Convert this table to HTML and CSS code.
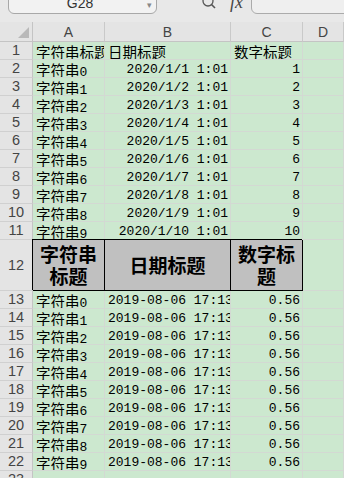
FILE: index.html
```html
<!DOCTYPE html>
<html lang="zh-CN">
<head>
<meta charset="utf-8">
<title>工作表</title>
<link rel="stylesheet" href="styles.css">
</head>
<body>
<div class="app">
  <div class="formula-bar">
    <div class="namebox"><span class="ref">G28</span><span class="drop">▾</span></div>
    <svg class="lookup" width="20" height="14" viewBox="0 0 20 14">
      <circle cx="8" cy="1" r="5" fill="none" stroke="#555" stroke-width="1.3"/>
      <line x1="11.5" y1="4.5" x2="15" y2="8" stroke="#555" stroke-width="1.6"/>
    </svg>
    <span class="fx">fx</span>
    <div class="input"></div>
  </div>

  <div class="sheet">
    <div class="corner"><svg width="33" height="20" viewBox="0 0 33 20"><polygon points="29,5 29,16 18,16" fill="#b9b9b9"/></svg></div>
    <div class="ch">A</div><div class="ch">B</div><div class="ch">C</div><div class="ch">D</div>

    <div class="rh">1</div><div class="c">字符串标题</div><div class="c">日期标题</div><div class="c">数字标题</div><div class="c"></div>
    <div class="rh">2</div><div class="c">字符串<span class="n">0</span></div><div class="c num r">2020/1/1 1:01</div><div class="c num r">1</div><div class="c"></div>
    <div class="rh">3</div><div class="c">字符串<span class="n">1</span></div><div class="c num r">2020/1/2 1:01</div><div class="c num r">2</div><div class="c"></div>
    <div class="rh">4</div><div class="c">字符串<span class="n">2</span></div><div class="c num r">2020/1/3 1:01</div><div class="c num r">3</div><div class="c"></div>
    <div class="rh">5</div><div class="c">字符串<span class="n">3</span></div><div class="c num r">2020/1/4 1:01</div><div class="c num r">4</div><div class="c"></div>
    <div class="rh">6</div><div class="c">字符串<span class="n">4</span></div><div class="c num r">2020/1/5 1:01</div><div class="c num r">5</div><div class="c"></div>
    <div class="rh">7</div><div class="c">字符串<span class="n">5</span></div><div class="c num r">2020/1/6 1:01</div><div class="c num r">6</div><div class="c"></div>
    <div class="rh">8</div><div class="c">字符串<span class="n">6</span></div><div class="c num r">2020/1/7 1:01</div><div class="c num r">7</div><div class="c"></div>
    <div class="rh">9</div><div class="c">字符串<span class="n">7</span></div><div class="c num r">2020/1/8 1:01</div><div class="c num r">8</div><div class="c"></div>
    <div class="rh">10</div><div class="c">字符串<span class="n">8</span></div><div class="c num r">2020/1/9 1:01</div><div class="c num r">9</div><div class="c"></div>
    <div class="rh">11</div><div class="c">字符串<span class="n">9</span></div><div class="c num r">2020/1/10 1:01</div><div class="c num r">10</div><div class="c"></div>

    <div class="rh">12</div><div class="c hd first">字符串标题</div><div class="c hd">日期标题</div><div class="c hd">数字标题</div><div class="c"></div>

    <div class="rh">13</div><div class="c">字符串<span class="n">0</span></div><div class="c num">2019-08-06 17:13:25</div><div class="c num r">0.56</div><div class="c"></div>
    <div class="rh">14</div><div class="c">字符串<span class="n">1</span></div><div class="c num">2019-08-06 17:13:25</div><div class="c num r">0.56</div><div class="c"></div>
    <div class="rh">15</div><div class="c">字符串<span class="n">2</span></div><div class="c num">2019-08-06 17:13:25</div><div class="c num r">0.56</div><div class="c"></div>
    <div class="rh">16</div><div class="c">字符串<span class="n">3</span></div><div class="c num">2019-08-06 17:13:25</div><div class="c num r">0.56</div><div class="c"></div>
    <div class="rh">17</div><div class="c">字符串<span class="n">4</span></div><div class="c num">2019-08-06 17:13:25</div><div class="c num r">0.56</div><div class="c"></div>
    <div class="rh">18</div><div class="c">字符串<span class="n">5</span></div><div class="c num">2019-08-06 17:13:25</div><div class="c num r">0.56</div><div class="c"></div>
    <div class="rh">19</div><div class="c">字符串<span class="n">6</span></div><div class="c num">2019-08-06 17:13:25</div><div class="c num r">0.56</div><div class="c"></div>
    <div class="rh">20</div><div class="c">字符串<span class="n">7</span></div><div class="c num">2019-08-06 17:13:25</div><div class="c num r">0.56</div><div class="c"></div>
    <div class="rh">21</div><div class="c">字符串<span class="n">8</span></div><div class="c num">2019-08-06 17:13:25</div><div class="c num r">0.56</div><div class="c"></div>
    <div class="rh">22</div><div class="c">字符串<span class="n">9</span></div><div class="c num">2019-08-06 17:13:25</div><div class="c num r">0.56</div><div class="c"></div>
    <div class="rh">23</div><div class="c"></div><div class="c"></div><div class="c"></div><div class="c"></div>
  </div>
</div>
</body>
</html>
```

FILE: styles.css
```css
* { box-sizing: border-box; }

html, body {
  margin: 0;
  padding: 0;
  width: 344px;
  height: 478px;
  overflow: hidden;
  background: #e6e6e6;
}

.app {
  width: 344px;
  height: 478px;
  overflow: hidden;
}

/* name box, lookup icon, fx label and formula input */
.formula-bar {
  height: 22px;
  display: flex;
  align-items: flex-start;
  background: #e8e8e8;
  overflow: hidden;
}

.namebox {
  margin-left: 8px;
  margin-top: -15px;
  width: 149px;
  height: 29px;
  border: 1px solid #a8a8a8;
  border-radius: 6px;
  background: #f2f2f2;
  display: flex;
  align-items: flex-end;
  padding: 0 4px 3px 4px;
  font-family: "Liberation Sans", Arial, sans-serif;
  font-size: 14px;
  line-height: 14px;
  color: #333;
}

.namebox .ref {
  flex: 1;
  text-align: center;
}

.namebox .drop {
  font-size: 9px;
  line-height: 9px;
  color: #888;
  align-self: flex-start;
  margin-top: 15px;
}

.lookup {
  margin-left: 43px;
  display: block;
}

.fx {
  margin-left: 10px;
  margin-top: -7px;
  font-family: "Liberation Serif", "Times New Roman", serif;
  font-style: italic;
  font-size: 18px;
  line-height: 18px;
  color: #444;
}

.input {
  flex: 1;
  margin-left: 8px;
  margin-right: -8px;
  margin-top: -10px;
  height: 24px;
  border: 1px solid #ababab;
  border-radius: 6px;
  background: #efefef;
}

/* the worksheet grid */
.sheet {
  display: grid;
  grid-template-columns: 33px 72px 126px 72px 41px;
  grid-template-rows: 20px repeat(11, 18px) 51px repeat(11, 18px);
  background: #cce8cf;
}

.corner {
  background: #e4e4e4;
  border-right: 1px solid #c4c4c4;
  border-bottom: 1px solid #c4c4c4;
}

.corner svg { display: block; }

.ch {
  background: #e4e4e4;
  border-right: 1px solid #c9c9c9;
  border-bottom: 1px solid #c4c4c4;
  font-family: "Liberation Sans", Arial, sans-serif;
  font-size: 14px;
  line-height: 20px;
  text-align: center;
  color: #444;
}

.rh {
  background: #e4e4e4;
  border-right: 1px solid #c4c4c4;
  border-bottom: 1px solid #d0d0d0;
  font-family: "Liberation Sans", Arial, sans-serif;
  font-size: 14.5px;
  line-height: 17px;
  text-align: center;
  color: #444;
  display: flex;
  align-items: center;
  justify-content: center;
}

.c {
  background: #cce8cf;
  border-right: 1px solid #d3d9d3;
  border-bottom: 1px solid #d3d9d3;
  overflow: hidden;
  white-space: nowrap;
  padding: 1px 3px 0 3px;
  font-family: "Noto Sans CJK SC", sans-serif;
  font-size: 14.5px;
  line-height: 17px;
  color: #000;
}

.c .n {
  font-family: "Liberation Mono", "Courier New", monospace;
  font-size: 13px;
}

.c.num {
  font-family: "Liberation Mono", "Courier New", monospace;
  font-size: 13px;
}

.c.r {
  text-align: right;
  padding-right: 2px;
}

/* bordered header row inside the data */
.c.hd {
  background: #c0c0c0;
  border-right: 1px solid #000;
  border-bottom: 1px solid #000;
  box-shadow: -1px -1px 0 #000;
  white-space: normal;
  display: flex;
  align-items: center;
  justify-content: center;
  text-align: center;
  padding: 0 2px;
  font-weight: 700;
  font-size: 19px;
  line-height: 22px;
}
```
